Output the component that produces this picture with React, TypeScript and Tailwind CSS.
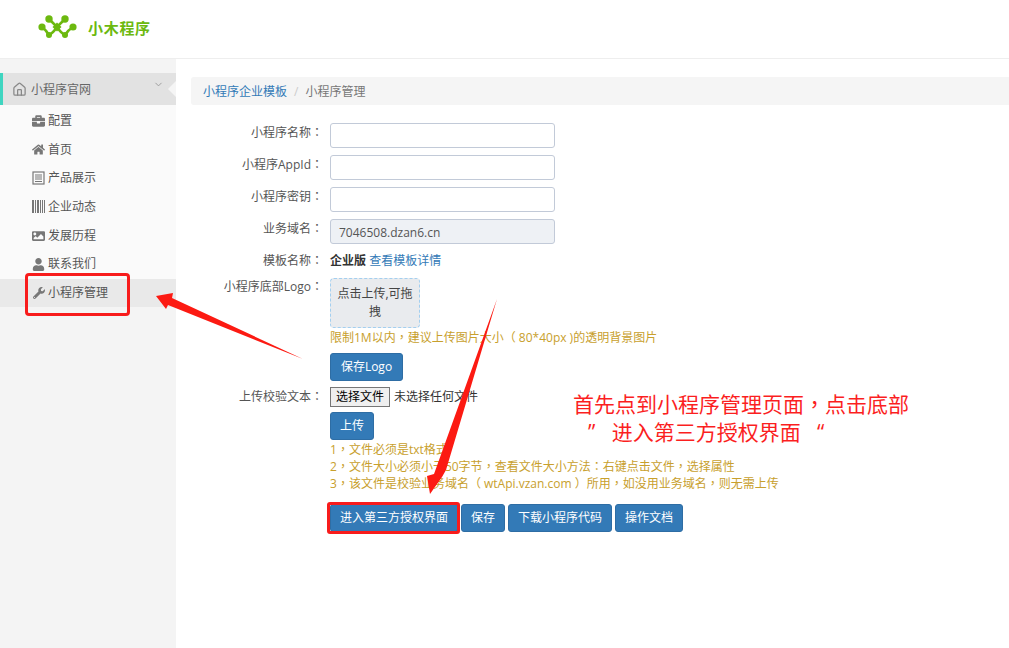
import { Home, ChevronDown } from "lucide-react";
import { FaBriefcase, FaHome, FaImage, FaUser, FaWrench } from "react-icons/fa";

function ListAlt() {
  return (
    <svg width="13" height="14" viewBox="0 0 13 14" fill="none" stroke="currentColor">
      <rect x="1" y="1" width="11" height="12" strokeWidth="1.2" />
      <path d="M3 4h7M3 6h7M3 8h7M3 10.5h7" strokeWidth="1" />
    </svg>
  );
}

function Barcode() {
  return (
    <svg width="13" height="13" viewBox="0 0 13 13" fill="currentColor">
      <path d="M0 0h2v13H0zM3 0h1v13H3zM5 0h2v13H5zM8 0h1v13H8zM10 0h1v13h-1zM12 0h1v13h-1z" />
    </svg>
  );
}

const menu = [
  { icon: <FaBriefcase size={14} />, label: "配置" },
  { icon: <FaHome size={15} />, label: "首页" },
  { icon: <ListAlt />, label: "产品展示" },
  { icon: <Barcode />, label: "企业动态" },
  { icon: <FaImage size={14} />, label: "发展历程" },
  { icon: <FaUser size={13} />, label: "联系我们" },
];

// the original's full-width punctuation sits centred in its cell, as in the TC font
function Zh({ text }: { text: string }) {
  return (
    <>
      {text.split(/([，：（）])/).map((part, i) =>
        i % 2 ? (
          <span key={i} className="font-['Noto_Sans_CJK_TC'] leading-none">
            {part}
          </span>
        ) : (
          part
        ),
      )}
    </>
  );
}

function Logo() {
  return (
    <svg width="40" height="26" viewBox="0 0 40 26" className="shrink-0">
      <g stroke="#6cb90f" strokeWidth="2.6" fill="none">
        <path d="M5 12 Q9 15 12 20 Q16 18 20 12 Q24 18 28 20 Q31 15 36 12" />
        <path d="M12 4 L20 12 L28 4" />
      </g>
      <g fill="#6cb90f">
        <circle cx="5" cy="12" r="3.6" />
        <circle cx="36" cy="12" r="3.6" />
        <circle cx="12" cy="4" r="3.7" />
        <circle cx="28" cy="4" r="3.7" />
        <circle cx="12" cy="20" r="3" />
        <circle cx="28" cy="20" r="3" />
        <path d="M20 7.5 L24.5 12 L20 16.5 L15.5 12 Z" />
      </g>
    </svg>
  );
}

function Row({ label, labelClass = "", children }: { label: string; labelClass?: string; children: React.ReactNode }) {
  return (
    <div className="flex">
      <label className={"w-[139px] pr-[7px] text-right leading-[17px] text-[#555] " + labelClass}>
        <Zh text={label} />
      </label>
      <div className="flex-1">{children}</div>
    </div>
  );
}

function Input({ value, disabled }: { value?: string; disabled?: boolean }) {
  return (
    <div
      className={
        "h-[25px] w-[225px] rounded-[3px] border border-[#c2cad8] px-[8px] leading-[25px] text-[#555] " +
        (disabled ? "bg-[#eef1f5]" : "bg-white")
      }
    >
      {value}
    </div>
  );
}

function Btn({ children, className = "" }: { children: React.ReactNode; className?: string }) {
  return (
    <button className={"h-[28px] rounded-[3px] border border-[#2e6da4] bg-[#337ab7] px-[9px] text-[12px] text-white " + className}>
      {children}
    </button>
  );
}

export default function App() {
  return (
    <div className="relative h-[648px] w-[1009px] overflow-hidden bg-white font-['Open_Sans','Noto_Sans_CJK_SC',sans-serif] text-[12px] text-[#333]">
      <header className="flex h-[59px] items-center gap-[11px] border-b border-[#eeeeee] pb-[3px] pl-[37px]">
        <Logo />
        <span className="pt-[2px] text-[15px] font-bold tracking-[0.7px] text-[#6cb90f]">小木程序</span>
      </header>

      <div className="flex h-[589px]">
        <aside className="w-[176px] shrink-0 bg-[#f4f4f4] pt-[14px]">
          <div className="relative flex h-[32px] items-center gap-[4px] border-l-[3px] border-[#3fd5c0] bg-[#e2e2e2] pl-[9px] pt-[1px] text-[#666]">
            <Home size={15} className="text-[#888]" />
            <span>小程序官网</span>
            <ChevronDown size={11} className="absolute right-[12px] top-[6px] text-[#999]" />
            <span className="absolute right-0 top-[8px] h-0 w-0 border-y-[8px] border-r-[8px] border-y-transparent border-r-[#f5f5f5]" />
          </div>
          <ul className="bg-[#fafafa] pt-[1.5px]">
            {menu.map((m) => (
              <li key={m.label} className="flex h-[28.7px] items-center gap-[3px] pl-[32px] text-[#555]">
                <span className="flex w-[13px] justify-center text-[#777]">{m.icon}</span>
                {m.label}
              </li>
            ))}
            <li className="flex h-[28.7px] items-center gap-[3px] bg-[#e9e9e9] pl-[32px] text-[#555]">
              <span className="flex w-[13px] justify-center text-[#777]">
                <FaWrench size={12} />
              </span>
              小程序管理
            </li>
          </ul>
        </aside>

        <main className="flex-1 pl-[15px] pt-[18px]">
          <nav className="flex h-[28px] items-center gap-[7px] rounded-l-[3px] bg-[#f5f5f5] pl-[12px] pt-[1px] text-[#777]">
            <span className="text-[#337ab7]">小程序企业模板</span>
            <span className="text-[#ccc]">/</span>
            <span>小程序管理</span>
          </nav>

          <form className="mt-[18px] flex flex-col">
            <div className="flex flex-col gap-[7px]">
              <Row label="小程序名称：" labelClass="pt-[1px]"><Input /></Row>
              <Row label="小程序AppId：" labelClass="pt-[1px]"><Input /></Row>
              <Row label="小程序密钥：" labelClass="pt-[1px]"><Input /></Row>
              <Row label="业务域名：" labelClass="pt-[1px]"><Input value="7046508.dzan6.cn" disabled /></Row>
            </div>
            <div className="mt-[8px]">
              <Row label="模板名称：">
                <span className="font-bold text-[#333]">企业版</span>{" "}
                <span className="text-[#337ab7]">查看模板详情</span>
              </Row>
            </div>
            <div className="mt-[8px]">
              <Row label="小程序底部Logo：">
                <div className="flex h-[50px] w-[90px] items-center justify-center rounded-[4px] border border-dashed border-[#a3cff0] bg-[#e9ebee] px-[4px] text-center leading-[18px] text-[#444]">
                  点击上传,可拖拽
                </div>
                <p className="mt-[1px] leading-[17px] text-[#c8a02d]">
                  <Zh text="限制1M以内，建议上传图片大小（ 80*40px )的透明背景图片" />
                </p>
                <Btn className="mt-[7px] w-[73px] px-0">保存Logo</Btn>
              </Row>
            </div>
            <div className="mt-[6px]">
              <Row label="上传校验文本：" labelClass="pt-[1px]">
                <div className="flex h-[20px] items-center gap-[4px]">
                  <span className="flex h-[20px] w-[60px] items-center justify-center border border-[#767676] bg-[#efefef] text-black">选择文件</span>
                  <span className="text-[#333]">未选择任何文件</span>
                </div>
                <Btn className="mt-[5px]">上传</Btn>
                <div className="mt-[1px] leading-[17px] text-[#c8a02d]">
                  <p><Zh text="1，文件必须是txt格式" /></p>
                  <p><Zh text="2，文件大小必须小于50字节，查看文件大小方法：右键点击文件，选择属性" /></p>
                  <p><Zh text="3，该文件是校验业务域名（ wtApi.vzan.com ）所用，如没用业务域名，则无需上传" /></p>
                </div>
                <div className="mt-[12px] flex gap-[3px]">
                  <Btn>进入第三方授权界面</Btn>
                  <Btn>保存</Btn>
                  <Btn>下载小程序代码</Btn>
                  <Btn>操作文档</Btn>
                </div>
              </Row>
            </div>
          </form>
        </main>
      </div>

      {/* annotations drawn over the page */}
      <div className="absolute left-[25px] top-[273px] h-[43px] w-[105px] rounded-[4px] border-[3px] border-[#f81c1c]" />
      <div className="absolute left-[327px] top-[502px] h-[32px] w-[133px] rounded-[3px] border-[3px] border-[#f81c1c]" />
      <svg className="absolute left-0 top-0" width="1009" height="648" viewBox="0 0 1009 648">
        <polygon fill="#fc1a12" points="303,359 172,298 173,293 156,296 166,309 168,305" />
        <polygon fill="#fc1a12" points="497,299 446,470 442,477 430,494 427,476 434,474" />
      </svg>
      <div className="absolute left-[573px] top-[390px] text-[21px] leading-[28px] text-[#fb1f1f]">
        <p><Zh text="首先点到小程序管理页面，点击底部" /></p>
        <p className="pl-[15px]">”&nbsp;&nbsp;&nbsp;进入第三方授权界面&nbsp;&nbsp;&nbsp;“</p>
      </div>
    </div>
  );
}
